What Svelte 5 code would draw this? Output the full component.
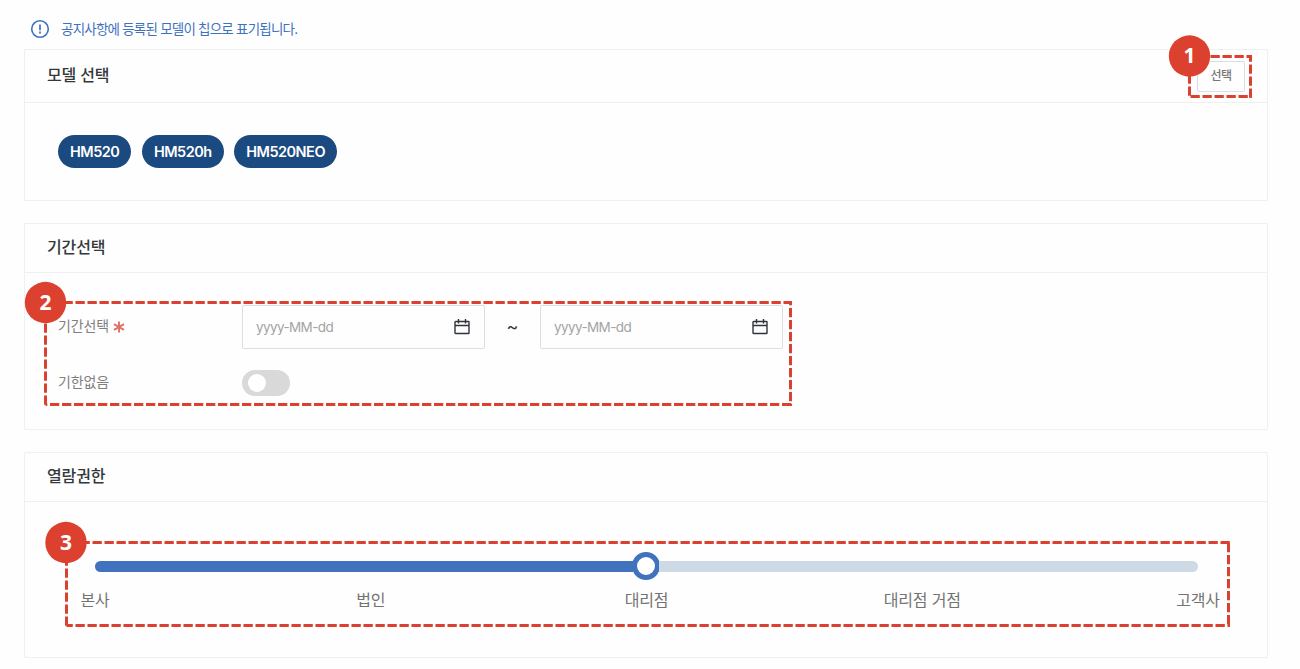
<script>
  const models = ['HM520', 'HM520h', 'HM520NEO'];
  const levels = ['본사', '법인', '대리점', '대리점 거점', '고객사'];
  // phase: distance of the first dash from the corner, for the top, right, bottom and left sides
  const marks = [
    { n: 1, x1: 1189.5, y1: 56.5, x2: 1250.5, y2: 96.5, cx: 1189.5, cy: 56, phase: [9, 8, 1, 6] },
    { n: 2, x1: 45.5, y1: 302.5, x2: 790.5, y2: 404.5, cx: 45.5, cy: 302.5, phase: [6, 5.5, 4.5, 9] },
    { n: 3, x1: 66.5, y1: 542.5, x2: 1228.5, y2: 625.5, cx: 66, cy: 542.5, phase: [2, 0.5, 9, 2] }
  ];
  const sides = (m) => [
    `M${m.x1} ${m.y1}H${m.x2 + 1.5}`,
    `M${m.x2} ${m.y1}V${m.y2 + 1.5}`,
    `M${m.x1} ${m.y2}H${m.x2 + 1.5}`,
    `M${m.x1} ${m.y1}V${m.y2 + 1.5}`
  ];
</script>

{#snippet dateField()}
  <div class="date">
    <span>yyyy-MM-dd</span>
    <svg width="16" height="16" viewBox="0 0 16 16" fill="none" stroke="#30343a" stroke-width="1.4">
      <rect x="1" y="2.5" width="14" height="12" rx="0.6" />
      <path d="M1 6.5H15M4.5 0V4.4M11.5 0V4.4" />
    </svg>
  </div>
{/snippet}

<main>
  <div class="notice">
    <svg width="20" height="20" viewBox="0 0 20 20" fill="none" stroke="#3f72be">
      <circle cx="10" cy="10" r="8.3" stroke-width="1.6" />
      <path d="M10 5.5V11.2M10 12.6V14.4" stroke-width="1.7" />
    </svg>
    <span>공지사항에 등록된 모델이 칩으로 표기됩니다.</span>
  </div>

  <section class="model">
    <header><h2>모델 선택</h2><button>선택</button></header>
    <div class="chips">
      {#each models as model}<span class="chip">{model}</span>{/each}
    </div>
  </section>

  <section class="period">
    <header><h2>기간선택</h2></header>
    <div class="form">
      <div class="row dates">
        <div class="label"><span>기간선택</span>
          <svg width="12" height="12" viewBox="0 0 12 12" stroke="#db7168" stroke-width="1.9"><path d="M6 0.5V11.5M1 3.1L11 8.9M11 3.1L1 8.9" /></svg>
        </div>
        {@render dateField()}
        <span class="tilde">~</span>
        {@render dateField()}
      </div>
      <div class="row limit">
        <div class="label"><span>기한없음</span></div>
        <div class="toggle"><i></i></div>
      </div>
    </div>
  </section>

  <section class="access">
    <header><h2>열람권한</h2></header>
    <div class="slider">
      <div class="track"><div class="fill"></div><div class="thumb"></div><div class="rest"></div></div>
      <div class="levels">
        {#each levels as level}<span>{level}</span>{/each}
      </div>
    </div>
  </section>

  <svg class="marks" width="1300" height="669" viewBox="0 0 1300 669">
    {#each marks as m}
      {#each sides(m) as d, i}
        <path {d} stroke-dasharray="9.3 2.7" stroke-dashoffset={12 - m.phase[i]} />
      {/each}
      <circle cx={m.cx} cy={m.cy} r="20.7" />
      <text x={m.cx} y={m.cy + 7}>{m.n}</text>
    {/each}
  </svg>
</main>

<style>
  :global(body) { margin: 0; background: #fefefe; }
  main {
    position: relative;
    box-sizing: border-box;
    width: 1300px;
    height: 669px;
    overflow: hidden;
    padding: 0 32px 0 24px;
    font-family: Inter, "Noto Sans CJK KR", sans-serif;
    color: #34373b;
  }
  .notice { display: flex; align-items: center; height: 49px; padding: 9px 0 0 6px; box-sizing: border-box; gap: 11px; color: #3f72be; font-size: 13.5px; letter-spacing: -0.78px; white-space: nowrap; }
  .notice span { padding-bottom: 3px; }
  section { box-sizing: border-box; border: 1px solid #f0f0f0; border-radius: 2px; box-shadow: 0 0 1px #eee; background: #fefefe; }
  header { box-sizing: border-box; display: flex; align-items: center; justify-content: space-between; border-bottom: 1px solid #f0f0f0; padding: 0 22px; }
  h2 { margin: 0; padding-bottom: 2px; font-size: 16px; font-weight: 500; line-height: 24px; letter-spacing: -0.1px; }
  .model { height: 152px; margin-bottom: 22px; }
  .model header { height: 53px; }
  .model h2 { letter-spacing: -0.15px; }
  .period { height: 207px; margin-bottom: 22px; }
  .period header, .access header { height: 49px; }
  .access { height: 206px; }
  button { box-sizing: border-box; width: 48px; height: 31px; padding: 0; border: 1px solid #d9dee6; border-radius: 2px; background: #fefefe; color: #777; font: 500 12px/20px Inter, "Noto Sans CJK KR", sans-serif; letter-spacing: -0.6px; }
  .chips { display: flex; gap: 10.5px; padding: 32px 33px; }
  .chip { height: 33px; padding: 0 12px; border-radius: 17px; background: #1b4a80; color: #fff; font-size: 14.5px; line-height: 33px; font-weight: 600; letter-spacing: -0.5px; }
  .form { padding: 32px 33px; }
  .row { display: flex; align-items: center; }
  .label { display: flex; align-items: center; gap: 4px; width: 184px; color: #808080; font-size: 14px; letter-spacing: -0.15px; }
  .label span { padding-bottom: 4px; }
  .date { box-sizing: border-box; display: flex; align-items: center; justify-content: space-between; width: 243px; height: 44px; padding: 0 14px 0 13px; border: 1px solid #dadfe6; border-radius: 2px; color: #a4a4a4; font-size: 13.5px; letter-spacing: -0.6px; }
  .date span { padding-bottom: 1px; }
  .tilde { width: 55px; padding-bottom: 1px; text-align: center; font-size: 18px; }
  .limit { margin-top: 21px; }
  .toggle { box-sizing: border-box; width: 48px; height: 26px; padding: 4px 6px; border-radius: 13px; background: #d9d9d9; }
  .toggle i { display: block; width: 18px; height: 18px; border-radius: 50%; background: #fff; }
  .slider { padding: 50px 69px 0 70px; }
  .track { display: flex; align-items: center; height: 28px; }
  .fill { flex: 0 0 538px; height: 11px; border-radius: 6px 0 0 6px; background: #4072be; }
  .thumb { box-sizing: border-box; flex: 0 0 28px; height: 28px; margin: 0 -1px; border: 5px solid #4072be; border-radius: 50%; background: #fff; }
  .rest { flex: 1; height: 11px; border-radius: 0 6px 6px 0; background: #cddae5; }
  .levels { display: flex; justify-content: space-between; margin-top: 8px; color: #737373; font-size: 16px; line-height: 24px; letter-spacing: -0.2px; white-space: nowrap; }
  .levels span { display: flex; justify-content: center; width: 0; }
  .marks { position: absolute; left: 0; top: 0; }
  .marks path { fill: none; stroke: #dc412f; stroke-width: 3; }
  .marks circle { fill: #dc412f; }
  .marks text { fill: #fff; font: 700 21px "Noto Sans", sans-serif; text-anchor: middle; }
</style>
